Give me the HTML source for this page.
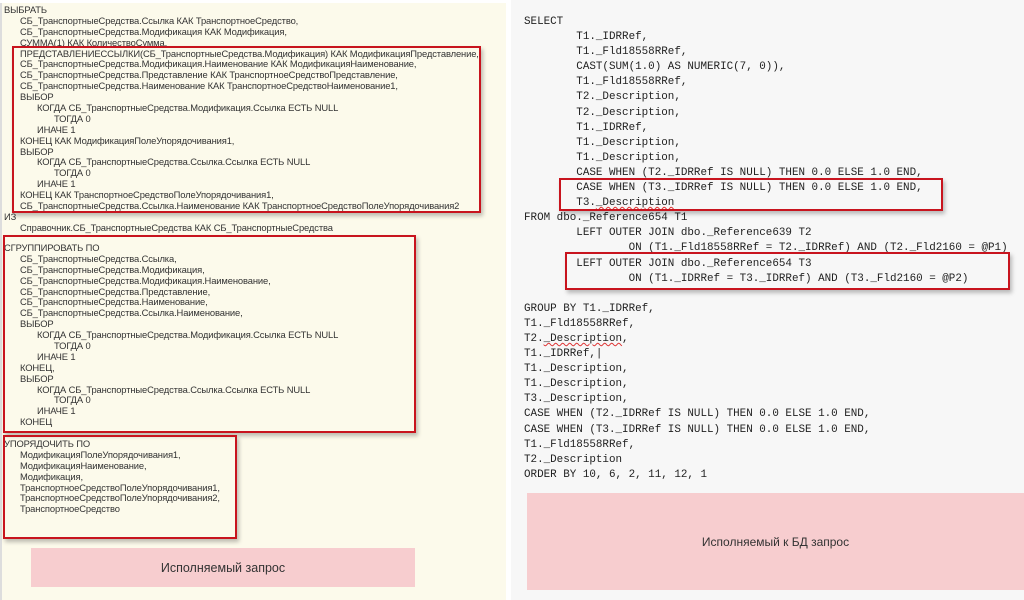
<!DOCTYPE html>
<html><head><meta charset="utf-8"><style>
*{margin:0;padding:0}
body{width:1024px;height:600px;background:#fff;position:relative;overflow:hidden}
#L{position:absolute;left:0;top:3px;width:506px;height:597px;background:#fcfaeb;border-left:2px solid #ddd;box-sizing:border-box}
#R{position:absolute;left:511px;top:0;width:513px;height:600px;background:#f7f7f7}
.l{position:absolute;left:4px;font-family:"Liberation Sans","DejaVu Sans",sans-serif;font-size:9.4px;color:#333;white-space:nowrap;line-height:10.9px;letter-spacing:-0.12px}
.l div{height:10.9px}
.a{padding-left:16px}.b{padding-left:33px}.c{padding-left:50px}
.m{position:absolute;left:524px;font-family:"Liberation Mono",monospace;font-size:10.9px;color:#222;white-space:pre;line-height:15.1px}
.box{position:absolute;border:2px solid #c8141e;box-shadow:2px 3px 4px rgba(0,0,0,0.25);box-sizing:border-box}
.pink{position:absolute;background:#f7cdcf;font-family:"Liberation Sans",sans-serif;color:#333;display:flex;align-items:center;justify-content:center}
.sq{text-decoration:underline wavy #d33;text-decoration-thickness:1px}
</style></head><body>
<div id="L"></div><div id="R"></div>
<div class="l" style="top:5px">
<div>ВЫБРАТЬ</div>
<div class="a">СБ_ТранспортныеСредства.Ссылка КАК ТранспортноеСредство,</div>
<div class="a">СБ_ТранспортныеСредства.Модификация КАК Модификация,</div>
<div class="a">СУММА(1) КАК КоличествоСумма,</div>
<div class="a">ПРЕДСТАВЛЕНИЕССЫЛКИ(СБ_ТранспортныеСредства.Модификация) КАК МодификацияПредставление,</div>
<div class="a">СБ_ТранспортныеСредства.Модификация.Наименование КАК МодификацияНаименование,</div>
<div class="a">СБ_ТранспортныеСредства.Представление КАК ТранспортноеСредствоПредставление,</div>
<div class="a">СБ_ТранспортныеСредства.Наименование КАК ТранспортноеСредствоНаименование1,</div>
<div class="a">ВЫБОР</div>
<div class="b">КОГДА СБ_ТранспортныеСредства.Модификация.Ссылка ЕСТЬ NULL</div>
<div class="c">ТОГДА 0</div>
<div class="b">ИНАЧЕ 1</div>
<div class="a">КОНЕЦ КАК МодификацияПолеУпорядочивания1,</div>
<div class="a">ВЫБОР</div>
<div class="b">КОГДА СБ_ТранспортныеСредства.Ссылка.Ссылка ЕСТЬ NULL</div>
<div class="c">ТОГДА 0</div>
<div class="b">ИНАЧЕ 1</div>
<div class="a">КОНЕЦ КАК ТранспортноеСредствоПолеУпорядочивания1,</div>
<div class="a">СБ_ТранспортныеСредства.Ссылка.Наименование КАК ТранспортноеСредствоПолеУпорядочивания2</div>
<div>ИЗ</div>
<div class="a">Справочник.СБ_ТранспортныеСредства КАК СБ_ТранспортныеСредства</div>
</div>
<div class="l" style="top:243px">
<div>СГРУППИРОВАТЬ ПО</div>
<div class="a">СБ_ТранспортныеСредства.Ссылка,</div>
<div class="a">СБ_ТранспортныеСредства.Модификация,</div>
<div class="a">СБ_ТранспортныеСредства.Модификация.Наименование,</div>
<div class="a">СБ_ТранспортныеСредства.Представление,</div>
<div class="a">СБ_ТранспортныеСредства.Наименование,</div>
<div class="a">СБ_ТранспортныеСредства.Ссылка.Наименование,</div>
<div class="a">ВЫБОР</div>
<div class="b">КОГДА СБ_ТранспортныеСредства.Модификация.Ссылка ЕСТЬ NULL</div>
<div class="c">ТОГДА 0</div>
<div class="b">ИНАЧЕ 1</div>
<div class="a">КОНЕЦ,</div>
<div class="a">ВЫБОР</div>
<div class="b">КОГДА СБ_ТранспортныеСредства.Ссылка.Ссылка ЕСТЬ NULL</div>
<div class="c">ТОГДА 0</div>
<div class="b">ИНАЧЕ 1</div>
<div class="a">КОНЕЦ</div>
</div>
<div class="l" style="top:439px">
<div>УПОРЯДОЧИТЬ ПО</div>
<div class="a">МодификацияПолеУпорядочивания1,</div>
<div class="a">МодификацияНаименование,</div>
<div class="a">Модификация,</div>
<div class="a">ТранспортноеСредствоПолеУпорядочивания1,</div>
<div class="a">ТранспортноеСредствоПолеУпорядочивания2,</div>
<div class="a">ТранспортноеСредство</div>
</div>
<div class="box" style="left:12px;top:46px;width:469px;height:167px"></div>
<div class="box" style="left:3px;top:235px;width:413px;height:198px"></div>
<div class="box" style="left:3px;top:435px;width:234px;height:104px"></div>
<div class="pink" style="left:31px;top:548px;width:384px;height:39px;font-size:12.5px">Исполняемый запрос</div>

<div class="m" style="top:15px">SELECT
        T1._IDRRef,
        T1._Fld18558RRef,
        CAST(SUM(1.0) AS NUMERIC(7, 0)),
        T1._Fld18558RRef,
        T2._Description,
        T2._Description,
        T1._IDRRef,
        T1._Description,
        T1._Description,
        CASE WHEN (T2._IDRRef IS NULL) THEN 0.0 ELSE 1.0 END,
        CASE WHEN (T3._IDRRef IS NULL) THEN 0.0 ELSE 1.0 END,
        T3.<span class="sq">_Description</span>
FROM dbo._Reference654 T1
        LEFT OUTER JOIN dbo._Reference639 T2
                ON (T1._Fld18558RRef = T2._IDRRef) AND (T2._Fld2160 = @P1)
        LEFT OUTER JOIN dbo._Reference654 T3
                ON (T1._IDRRef = T3._IDRRef) AND (T3._Fld2160 = @P2)

GROUP BY T1._IDRRef,
T1._Fld18558RRef,
T2.<span class="sq">_Description</span>,
T1._IDRRef,|
T1._Description,
T1._Description,
T3._Description,
CASE WHEN (T2._IDRRef IS NULL) THEN 0.0 ELSE 1.0 END,
CASE WHEN (T3._IDRRef IS NULL) THEN 0.0 ELSE 1.0 END,
T1._Fld18558RRef,
T2._Description
ORDER BY 10, 6, 2, 11, 12, 1</div>
<div class="box" style="left:559px;top:178px;width:384px;height:33px"></div>
<div class="box" style="left:565px;top:252px;width:445px;height:38px"></div>
<div class="pink" style="left:527px;top:493px;width:497px;height:97px;font-size:12px">Исполняемый к БД запрос</div>
</body></html>
